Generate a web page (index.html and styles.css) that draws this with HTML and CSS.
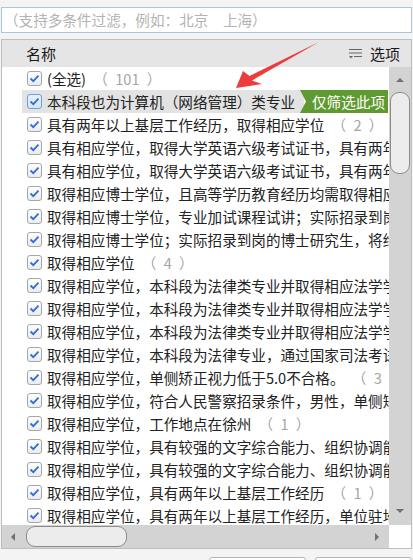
FILE: index.html
```html
<!DOCTYPE html>
<html lang="zh">
<head>
<meta charset="utf-8">
<link rel="stylesheet" href="styles.css">
</head>
<body>
<div class="page">
  <div class="search">（支持多条件过滤，例如：北京　上海）</div>
  <div class="panel">
    <div class="head">
      <span class="head-title">名称</span>
      <span class="head-opt">
        <svg class="opt-icon" width="13" height="10" viewBox="0 0 13 10"><rect x="0" y="0" width="13" height="1" fill="#666"/><rect x="0" y="3.5" width="13" height="1" fill="#666"/><rect x="5" y="7" width="8" height="1" fill="#666"/><path d="M0 7 H4 L2 9.5 Z" fill="#666"/></svg>
        选项
      </span>
    </div>
    <div class="body">
      <div class="list">
        <div class="row"><div class="item"><span class="cb"><svg width="11" height="9" viewBox="0 0 11 9"><path d="M1.5 4.5 L4.3 7.2 L9.5 1.6" fill="none" stroke="#2f6fd6" stroke-width="1.8"/></svg></span><span class="txt">(全选)<span class="cnt"> （ 101 ）</span></span></div></div>
        <div class="row"><div class="item hover"><span class="cb on"><svg width="11" height="9" viewBox="0 0 11 9"><path d="M1.5 4.5 L4.3 7.2 L9.5 1.6" fill="none" stroke="#2f6fd6" stroke-width="1.8"/></svg></span><span class="txt">本科段也为计算机（网络管理）类专业</span></div><span class="tag">仅筛选此项</span></div>
        <div class="row"><div class="item"><span class="cb"><svg width="11" height="9" viewBox="0 0 11 9"><path d="M1.5 4.5 L4.3 7.2 L9.5 1.6" fill="none" stroke="#2f6fd6" stroke-width="1.8"/></svg></span><span class="txt">具有两年以上基层工作经历，取得相应学位<span class="cnt"> （ 2 ）</span></span></div></div>
        <div class="row"><div class="item"><span class="cb"><svg width="11" height="9" viewBox="0 0 11 9"><path d="M1.5 4.5 L4.3 7.2 L9.5 1.6" fill="none" stroke="#2f6fd6" stroke-width="1.8"/></svg></span><span class="txt">具有相应学位，取得大学英语六级考试证书，具有两年以上工作经历</span></div></div>
        <div class="row"><div class="item"><span class="cb"><svg width="11" height="9" viewBox="0 0 11 9"><path d="M1.5 4.5 L4.3 7.2 L9.5 1.6" fill="none" stroke="#2f6fd6" stroke-width="1.8"/></svg></span><span class="txt">具有相应学位，取得大学英语六级考试证书，具有两年基层经历</span></div></div>
        <div class="row"><div class="item"><span class="cb"><svg width="11" height="9" viewBox="0 0 11 9"><path d="M1.5 4.5 L4.3 7.2 L9.5 1.6" fill="none" stroke="#2f6fd6" stroke-width="1.8"/></svg></span><span class="txt">取得相应博士学位，且高等学历教育经历均需取得相应学位</span></div></div>
        <div class="row"><div class="item"><span class="cb"><svg width="11" height="9" viewBox="0 0 11 9"><path d="M1.5 4.5 L4.3 7.2 L9.5 1.6" fill="none" stroke="#2f6fd6" stroke-width="1.8"/></svg></span><span class="txt">取得相应博士学位，专业加试课程试讲；实际招录到岗的博士</span></div></div>
        <div class="row"><div class="item"><span class="cb"><svg width="11" height="9" viewBox="0 0 11 9"><path d="M1.5 4.5 L4.3 7.2 L9.5 1.6" fill="none" stroke="#2f6fd6" stroke-width="1.8"/></svg></span><span class="txt">取得相应博士学位；实际招录到岗的博士研究生，将给予科研启动经费</span></div></div>
        <div class="row"><div class="item"><span class="cb"><svg width="11" height="9" viewBox="0 0 11 9"><path d="M1.5 4.5 L4.3 7.2 L9.5 1.6" fill="none" stroke="#2f6fd6" stroke-width="1.8"/></svg></span><span class="txt">取得相应学位<span class="cnt"> （ 4 ）</span></span></div></div>
        <div class="row"><div class="item"><span class="cb"><svg width="11" height="9" viewBox="0 0 11 9"><path d="M1.5 4.5 L4.3 7.2 L9.5 1.6" fill="none" stroke="#2f6fd6" stroke-width="1.8"/></svg></span><span class="txt">取得相应学位，本科段为法律类专业并取得相应法学学位</span></div></div>
        <div class="row"><div class="item"><span class="cb"><svg width="11" height="9" viewBox="0 0 11 9"><path d="M1.5 4.5 L4.3 7.2 L9.5 1.6" fill="none" stroke="#2f6fd6" stroke-width="1.8"/></svg></span><span class="txt">取得相应学位，本科段为法律类专业并取得相应法学学位</span></div></div>
        <div class="row"><div class="item"><span class="cb"><svg width="11" height="9" viewBox="0 0 11 9"><path d="M1.5 4.5 L4.3 7.2 L9.5 1.6" fill="none" stroke="#2f6fd6" stroke-width="1.8"/></svg></span><span class="txt">取得相应学位，本科段为法律类专业并取得相应法学学位</span></div></div>
        <div class="row"><div class="item"><span class="cb"><svg width="11" height="9" viewBox="0 0 11 9"><path d="M1.5 4.5 L4.3 7.2 L9.5 1.6" fill="none" stroke="#2f6fd6" stroke-width="1.8"/></svg></span><span class="txt">取得相应学位，本科段为法律专业，通过国家司法考试</span></div></div>
        <div class="row"><div class="item"><span class="cb"><svg width="11" height="9" viewBox="0 0 11 9"><path d="M1.5 4.5 L4.3 7.2 L9.5 1.6" fill="none" stroke="#2f6fd6" stroke-width="1.8"/></svg></span><span class="txt">取得相应学位，单侧矫正视力低于5.0不合格。<span class="cnt"> （ 3 ）</span></span></div></div>
        <div class="row"><div class="item"><span class="cb"><svg width="11" height="9" viewBox="0 0 11 9"><path d="M1.5 4.5 L4.3 7.2 L9.5 1.6" fill="none" stroke="#2f6fd6" stroke-width="1.8"/></svg></span><span class="txt">取得相应学位，符合人民警察招录条件，男性，单侧矫正视力</span></div></div>
        <div class="row"><div class="item"><span class="cb"><svg width="11" height="9" viewBox="0 0 11 9"><path d="M1.5 4.5 L4.3 7.2 L9.5 1.6" fill="none" stroke="#2f6fd6" stroke-width="1.8"/></svg></span><span class="txt">取得相应学位，工作地点在徐州<span class="cnt"> （ 1 ）</span></span></div></div>
        <div class="row"><div class="item"><span class="cb"><svg width="11" height="9" viewBox="0 0 11 9"><path d="M1.5 4.5 L4.3 7.2 L9.5 1.6" fill="none" stroke="#2f6fd6" stroke-width="1.8"/></svg></span><span class="txt">取得相应学位，具有较强的文字综合能力、组织协调能力</span></div></div>
        <div class="row"><div class="item"><span class="cb"><svg width="11" height="9" viewBox="0 0 11 9"><path d="M1.5 4.5 L4.3 7.2 L9.5 1.6" fill="none" stroke="#2f6fd6" stroke-width="1.8"/></svg></span><span class="txt">取得相应学位，具有较强的文字综合能力、组织协调能力</span></div></div>
        <div class="row"><div class="item"><span class="cb"><svg width="11" height="9" viewBox="0 0 11 9"><path d="M1.5 4.5 L4.3 7.2 L9.5 1.6" fill="none" stroke="#2f6fd6" stroke-width="1.8"/></svg></span><span class="txt">取得相应学位，具有两年以上基层工作经历<span class="cnt"> （ 1 ）</span></span></div></div>
        <div class="row"><div class="item"><span class="cb"><svg width="11" height="9" viewBox="0 0 11 9"><path d="M1.5 4.5 L4.3 7.2 L9.5 1.6" fill="none" stroke="#2f6fd6" stroke-width="1.8"/></svg></span><span class="txt">取得相应学位，具有两年以上基层工作经历，单位驻地偏远</span></div></div>
      </div>
      <div class="vscroll">
        <div class="arrow up"></div>
        <div class="vthumb"></div>
        <div class="vspace"></div>
        <div class="arrow down"></div>
      </div>
    </div>
    <div class="hbar">
      <div class="htrack">
        <div class="arrow left"></div>
        <div class="hthumb"></div>
        <div class="hspace"></div>
        <div class="arrow right"></div>
      </div>
      <div class="corner"></div>
    </div>
  </div>
  <div class="footer">
    <div class="btn"></div>
    <div class="btn"></div>
  </div>
  <svg class="pointer" width="413" height="560" viewBox="0 0 413 560">
    <polygon points="236,88 243,71 249.5,76 319,42 252,80.5 262,84" fill="#ee3b3b"/>
  </svg>
</div>
</body>
</html>
```
FILE: styles.css
```css
* { box-sizing: border-box; }
html, body { margin: 0; padding: 0; }
body {
  width: 413px;
  height: 560px;
  overflow: hidden;
  background: #f4f4f4;
  font-family: "Noto Sans CJK SC", "Noto Sans", sans-serif;
  color: #222;
}
.page {
  position: relative;
  width: 413px;
  height: 560px;
  padding-top: 7px;
}
.search {
  margin-left: 1px;
  width: 411px;
  height: 26px;
  border: 1px solid #a9c6e3;
  background: #fff;
  color: #b3b3b3;
  font-size: 14.6px;
  line-height: 24px;
  padding-left: 2px;
  white-space: nowrap;
}
.panel {
  margin-top: 6px;
  margin-left: 1px;
  width: 411px;
  border: 1px solid #b7c0c9;
  background: #fff;
}
.head {
  height: 27px;
  background: #e5e5e5;
  display: flex;
  align-items: center;
  justify-content: space-between;
  padding: 0 11px 0 24px;
  font-size: 15px;
  color: #1a1a1a;
}
.head-opt {
  display: flex;
  align-items: center;
  gap: 8px;
}
.opt-icon { display: block; }
.body {
  display: flex;
  height: 458px;
}
.list {
  flex: 1;
  overflow: hidden;
}
.row {
  position: relative;
  height: 23px;
  padding-left: 20px;
  white-space: nowrap;
}
.item {
  display: flex;
  align-items: center;
  height: 23px;
  padding-left: 5px;
  font-size: 14.6px;
}
.item.hover {
  width: 282px;
  background: #e3e3e3;
  overflow: hidden;
}
.cb {
  flex: none;
  width: 15px;
  height: 15px;
  border: 1px solid #a6a6a6;
  border-radius: 3px;
  background: linear-gradient(#fdfdfd, #ececec);
  display: flex;
  align-items: center;
  justify-content: center;
  margin-right: 5px;
}
.cb.on {
  border-color: #6e9fd8;
  background: linear-gradient(#e8f1fb, #d5e4f5);
}
.cb svg { display: block; }
.txt { line-height: 23px; }
.cnt { color: #a5a5a5; word-spacing: 4px; }
.tag {
  position: absolute;
  top: 0;
  left: 298px;
  width: 88px;
  height: 23px;
  background: #5f9a31;
  color: #fff;
  font-size: 14.6px;
  line-height: 23px;
  padding-left: 12px;
  clip-path: polygon(0 0, 100% 0, 100% 100%, 0 100%, 6px 50%);
}
.vscroll {
  flex: none;
  width: 22px;
  background: #d3d3d3;
  display: flex;
  flex-direction: column;
  padding-top: 1px;
}
.arrow {
  flex: none;
  width: 22px;
  height: 24px;
  position: relative;
}
.arrow::after {
  content: "";
  position: absolute;
  width: 0;
  height: 0;
}
.arrow.up::after {
  left: 7px; top: 10px;
  border-left: 4px solid transparent;
  border-right: 4px solid transparent;
  border-bottom: 4px solid #707070;
}
.arrow.down::after {
  left: 7px; top: 8px;
  border-left: 4px solid transparent;
  border-right: 4px solid transparent;
  border-top: 4px solid #707070;
}
.vthumb {
  flex: none;
  margin: 0 1px;
  height: 82px;
  border: 1px solid #8c8c8c;
  border-radius: 9px;
  background: #ececec;
}
.vspace { flex: 1; }
.hbar {
  display: flex;
  height: 23px;
}
.htrack {
  flex: 1;
  display: flex;
  align-items: center;
  background: #d3d3d3;
}
.arrow.left, .arrow.right { width: 24px; height: 23px; }
.arrow.left::after {
  left: 9px; top: 8px;
  border-top: 4px solid transparent;
  border-bottom: 4px solid transparent;
  border-right: 4px solid #707070;
}
.arrow.right::after {
  left: 10px; top: 8px;
  border-top: 4px solid transparent;
  border-bottom: 4px solid transparent;
  border-left: 4px solid #707070;
}
.hthumb {
  flex: none;
  width: 101px;
  height: 21px;
  border: 1px solid #8c8c8c;
  border-radius: 9px;
  background: #ececec;
}
.hspace { flex: 1; }
.corner {
  flex: none;
  width: 22px;
  background: #fff;
}
.footer {
  display: flex;
  justify-content: flex-end;
  gap: 9px;
  margin-top: 8px;
  padding-right: 1px;
}
.btn {
  width: 97px;
  height: 30px;
  border: 1px solid #b5b5b5;
  border-radius: 3px;
  background: #fff;
}
.pointer {
  position: absolute;
  top: 0;
  left: 0;
  pointer-events: none;
}
```
